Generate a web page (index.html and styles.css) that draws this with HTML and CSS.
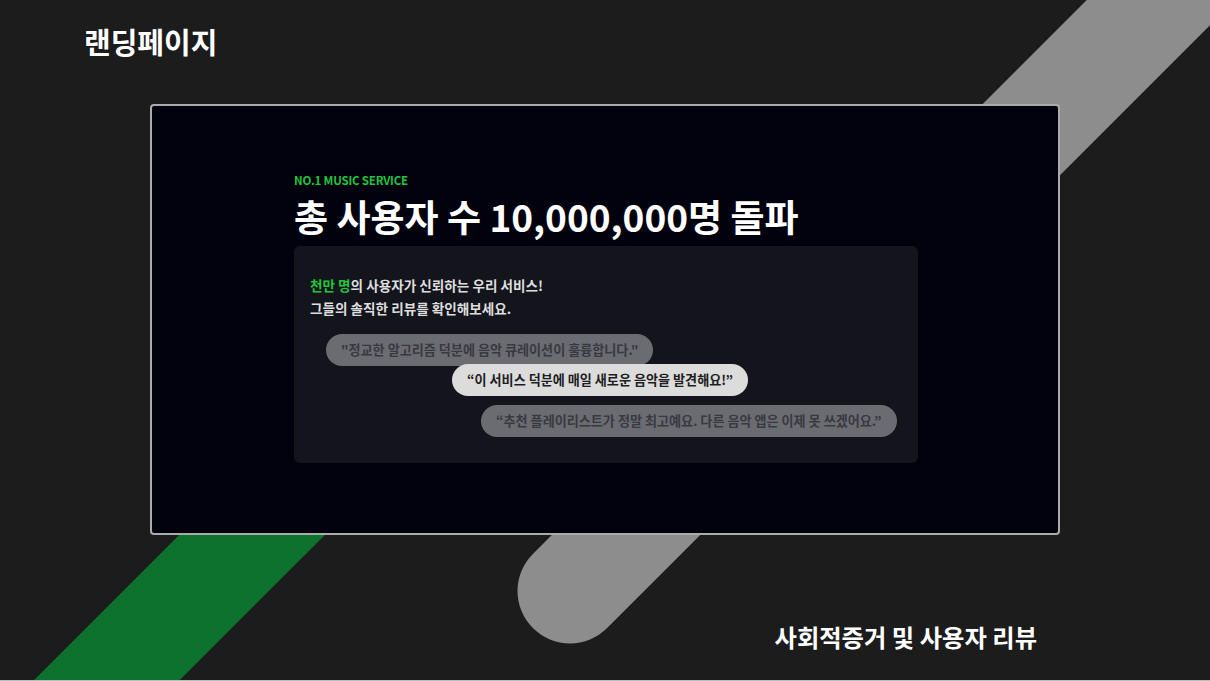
FILE: index.html
```html
<!DOCTYPE html>
<html>
  <head>
    <meta charset="UTF-8">
    <title>랜딩페이지</title>
    <link rel="stylesheet" href="styles.css">
  </head>
  <body>
    <div class="stage">
      <svg class="bands" width="1210" height="681" viewBox="0 0 1210 681">
        <line x1="300" y1="487" x2="-120" y2="907" stroke="#0d722d" stroke-width="103"/>
        <line x1="570" y1="591" x2="1320" y2="-159" stroke="#8d8d8d" stroke-width="105" stroke-linecap="round"/>
      </svg>
      <h1 class="page-title">랜딩페이지</h1>
      <section class="screen">
        <p class="eyebrow">NO.1 MUSIC SERVICE</p>
        <h2 class="headline">총 사용자 수 10,000,000명 돌파</h2>
        <div class="card">
          <p class="intro"><span class="green">천만 명</span>의 사용자가 신뢰하는 우리 서비스!<br>그들의 솔직한 리뷰를 확인해보세요.</p>
          <div class="reviews">
            <div class="pill dim p1">"정교한 알고리즘 덕분에 음악 큐레이션이 훌륭합니다."</div>
            <div class="pill bright p2">“이 서비스 덕분에 매일 새로운 음악을 발견해요!”</div>
            <div class="pill dim p3">“추천 플레이리스트가 정말 최고예요. 다른 음악 앱은 이제 못 쓰겠어요.”</div>
          </div>
        </div>
      </section>
      <p class="caption">사회적증거 및 사용자 리뷰</p>
    </div>
  </body>
</html>
```
FILE: styles.css
```css
body{
    margin:0;
    background:#1c1c1c;
    font-family:"Noto Sans CJK KR","Noto Sans",sans-serif;
}
.stage{
    position:relative;
    width:1210px;
    height:680px;
    overflow:hidden;
    border-bottom:1px solid #bdbdbd;
}
.bands{
    position:absolute;
    left:0;
    top:0;
}
.page-title{
    position:relative;
    margin:0;
    padding:21px 0 0 84px;
    height:104px;
    box-sizing:border-box;
    color:#fff;
    font-size:29px;
    font-weight:700;
    line-height:40px;
}
.screen{
    position:relative;
    margin:0 0 0 150px;
    width:910px;
    height:431px;
    box-sizing:border-box;
    border:2px solid #ababab;
    border-radius:4px;
    background:#02020f;
    padding:66px 0 0 142px;
}
.eyebrow{
    margin:0;
    color:#22c33d;
    font-size:11.5px;
    font-weight:700;
    line-height:16px;
    letter-spacing:-0.2px;
}
.headline{
    margin:3px 0 0;
    color:#fff;
    font-size:37px;
    font-weight:700;
    line-height:50px;
}
.card{
    margin-top:5px;
    width:624px;
    height:217px;
    box-sizing:border-box;
    background:#13141c;
    border-radius:6px;
    padding:28px 0 0 16px;
}
.intro{
    margin:0;
    color:#dedede;
    font-size:13.6px;
    font-weight:700;
    line-height:23px;
}
.green{
    color:#22c33d;
}
.reviews{
    display:flex;
    flex-direction:column;
    align-items:flex-start;
    margin-top:14px;
}
.pill{
    height:32px;
    line-height:32px;
    padding:0 15px;
    border-radius:16px;
    font-size:13.1px;
    font-weight:700;
    white-space:nowrap;
}
.dim{
    background:#6b6b72;
    color:#393940;
}
.bright{
    background:#dcdcdc;
    color:#1e1e22;
}
.p1{
    margin-left:16px;
}
.p2{
    margin-left:142px;
    margin-top:-2px;
}
.p3{
    margin-left:171px;
    margin-top:9px;
}
.caption{
    position:relative;
    margin:0;
    padding:84px 173px 0 0;
    text-align:right;
    color:#fff;
    font-size:24.3px;
    font-weight:700;
    line-height:36px;
}
```
